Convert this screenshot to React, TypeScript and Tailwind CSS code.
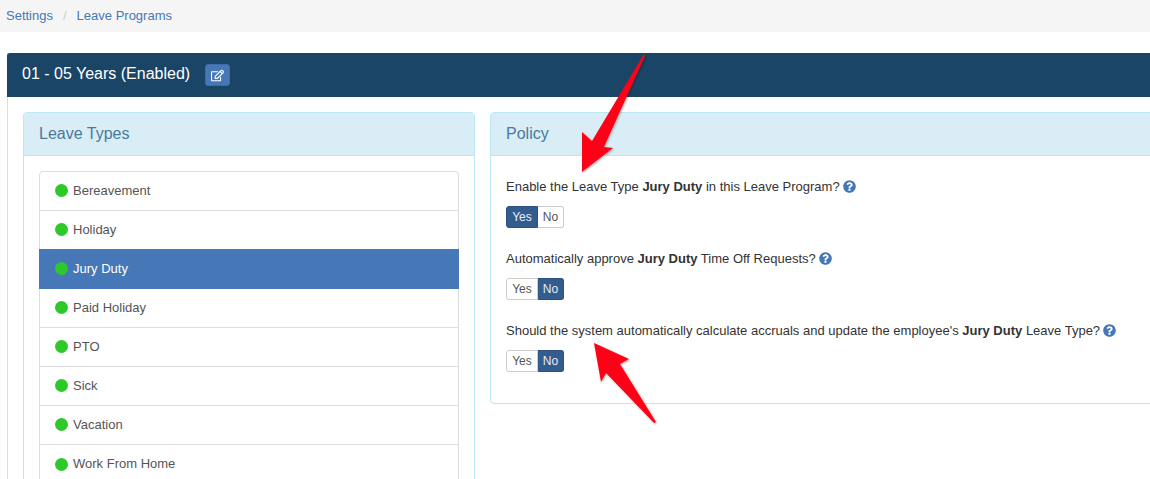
import { FaRegEdit, FaQuestionCircle } from "react-icons/fa";

const leaveTypes = ["Bereavement", "Holiday", "Jury Duty", "Paid Holiday", "PTO", "Sick", "Vacation", "Work From Home"];

function Toggle({ value }: { value: "Yes" | "No" }) {
  const on = "bg-[#335C8F] text-[#e8eef5] border-[#2c5080]";
  const off = "bg-white text-[#555] border-[#ccc]";
  return (
    <div className="flex h-[22px] w-[58px] text-[12px] leading-[20px]">
      <div className={`w-[32px] text-center border rounded-l-[3px] ${value === "Yes" ? on : off}`}>Yes</div>
      <div className={`w-[26px] text-center border border-l-0 rounded-r-[3px] ${value === "No" ? on : off}`}>No</div>
    </div>
  );
}

function Question({ children, value }: { children: React.ReactNode; value: "Yes" | "No" }) {
  return (
    <div className="mb-[21px]">
      <div className="flex items-center h-[20px] mb-[9px] text-[13px] text-[#333]">
        <span className="whitespace-pre">{children}</span>
        <FaQuestionCircle className="ml-[3px] mb-px text-[#4678B7] text-[13px]" />
      </div>
      <Toggle value={value} />
    </div>
  );
}

export default function App() {
  return (
    <div className="relative w-[1150px] h-[479px] overflow-hidden bg-white font-['Liberation_Sans',Arial,sans-serif]">
      {/* Breadcrumb */}
      <div className="flex items-center h-[32px] pl-[6px] pb-px bg-[#f5f5f5] text-[13px] text-[#4678B7]">
        <span>Settings</span>
        <span className="mx-[10px] text-[#ccc]">/</span>
        <span>Leave Programs</span>
      </div>

      <div className="ml-[7px] mt-[21px] w-[1200px] border-l border-[#ddd]">
        <div className="flex items-center h-[44px] -ml-px pl-[15px] bg-[#1A4567] rounded-t-[3px] text-white text-[16px]">
          <span className="pb-[2px]">01 - 05 Years (Enabled)</span>
          <span className="ml-[15px] flex items-center justify-center w-[25px] h-[22px] rounded-[3px] bg-[#4678B7] border border-[#3f6ca6] text-[13px]">
            <FaRegEdit />
          </span>
        </div>

        <div className="flex items-start gap-[15px] pl-[15px] pt-[15px]">
          {/* Leave types */}
          <div className="w-[452px] shrink-0 border border-[#bce8f1] rounded-[4px] h-[500px]">
            <div className="flex items-center h-[43px] pl-[15px] bg-[#D9EDF7] border-b border-[#bce8f1] rounded-t-[3px] text-[16px] text-[#4A7A9C]">
              Leave Types
            </div>
            <div className="mx-[15px] mt-[15px] border border-[#ddd] rounded-[4px]">
              {leaveTypes.map((name) => {
                const active = name === "Jury Duty";
                return (
                  <div
                    key={name}
                    className={`flex items-center pl-[15px] text-[13px] ${
                      active
                        ? "-mx-px pl-[16px] -mt-px h-[40px] pb-px relative bg-[#4678B7] text-white"
                        : "h-[39px] pb-px border-b border-[#ddd] text-[#555] last:border-b-0"
                    }`}
                  >
                    <span className="w-[13px] h-[13px] rounded-full bg-[#2DC928] mr-[5px] shrink-0" />
                    {name}
                  </div>
                );
              })}
            </div>
          </div>

          {/* Policy */}
          <div className="w-[700px] shrink-0 border border-[#bce8f1] rounded-[4px]">
            <div className="flex items-center h-[43px] pl-[15px] bg-[#D9EDF7] border-b border-[#bce8f1] rounded-t-[3px] text-[16px] text-[#4A7A9C]">
              Policy
            </div>
            <div className="pl-[15px] pt-[21px] pb-[10px]">
              <Question value="Yes">
                Enable the Leave Type <b>Jury Duty</b> in this Leave Program?
              </Question>
              <Question value="No">
                Automatically approve <b>Jury Duty</b> Time Off Requests?
              </Question>
              <Question value="No">
                Should the system automatically calculate accruals and update the employee's <b>Jury Duty</b> Leave Type?
              </Question>
            </div>
          </div>
        </div>
      </div>

      {/* Annotation arrows */}
      <svg className="absolute left-0 top-0 pointer-events-none" width="1150" height="479" viewBox="0 0 1150 479">
        <defs>
          <filter id="arrowShadow" x="-20%" y="-20%" width="140%" height="140%">
            <feDropShadow dx="1" dy="1" stdDeviation="1.2" floodColor="#000" floodOpacity="0.3" />
          </filter>
        </defs>
        <path d="M644 54 L645 56 L604 147 L613 148 L582 172 L582 132 L592 141 Z" fill="#FF0019" filter="url(#arrowShadow)" />
        <path d="M594 343 L629 359 L620 364 L656 422 L654 423 L606 373 L601 382 Z" fill="#FF0019" filter="url(#arrowShadow)" />
      </svg>
    </div>
  );
}
